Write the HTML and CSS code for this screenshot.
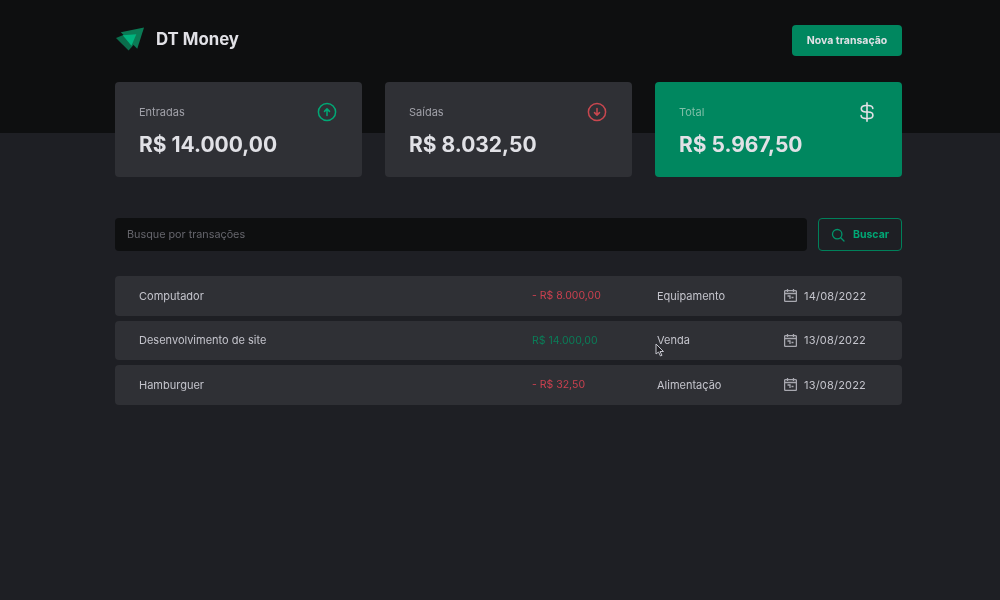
FILE: index.html
```html
<!DOCTYPE html>
<html lang="pt-BR">
<head>
    <meta charset="UTF-8">
    <meta name="viewport" content="width=device-width, initial-scale=1.0">
    <title>DT Money</title>
    <link rel="stylesheet" href="styles.css">
</head>
<body>

    <header class="header">
        <div class="header-content">
            <div class="logo">
                <svg class="logo-icon" width="29" height="25" viewBox="0 0 30 25">
                    <polygon points="0,11 12,6 20,16 13,24" fill="#0a6e4c"/>
                    <polygon points="5,5 29,0 22,22" fill="#0b7a55"/>
                    <polygon points="7,8 21,7 16,19" fill="#00b37e"/>
                </svg>
                <span>DT Money</span>
            </div>
            <button class="new-button">Nova transação</button>
        </div>
    </header>

    <main class="content">
        <section class="summary">
            <div class="card">
                <div class="card-top">
                    <span>Entradas</span>
                    <svg width="20" height="20" viewBox="0 0 20 20" fill="none" stroke="#00a875" stroke-width="1.5" stroke-linecap="round" stroke-linejoin="round">
                        <circle cx="10" cy="10" r="8.6"/>
                        <path d="M10 13.500V7M7.500 9.400 10 6.900l2.500 2.500"/>
                    </svg>
                </div>
                <strong>R$ 14.000,00</strong>
            </div>
            <div class="card">
                <div class="card-top">
                    <span>Saídas</span>
                    <svg width="20" height="20" viewBox="0 0 20 20" fill="none" stroke="#c9474f" stroke-width="1.500" stroke-linecap="round" stroke-linejoin="round">
                        <circle cx="10" cy="10" r="8.6"/>
                        <path d="M10 6.500V13M7.500 10.600 10 13.100l2.500-2.500"/>
                    </svg>
                </div>
                <strong>R$ 8.032,50</strong>
            </div>
            <div class="card card-green">
                <div class="card-top">
                    <span>Total</span>
                    <svg width="20" height="20" viewBox="0 0 20 20" fill="none" stroke="#e1e1e6" stroke-width="1.600" stroke-linecap="round" stroke-linejoin="round">
                        <path d="M10 .800v18.400M15.800 6.500C15.800 4.500 13.800 3.500 11 3.500H9C6.300 3.500 4.300 4.700 4.300 6.800S6.300 10 9 10h2.200c2.700 0 4.700 1.100 4.700 3.200s-2 3.300-4.700 3.300H9c-2.800 0-4.800-1-4.900-3"/>
                    </svg>
                </div>
                <strong>R$ 5.967,50</strong>
            </div>
        </section>

        <form class="search">
            <input type="text" placeholder="Busque por transações">
            <button type="button">
                <svg width="14" height="14" viewBox="0 0 14 14" fill="none" stroke="#00946a" stroke-width="1.300" stroke-linecap="round">
                    <circle cx="6.200" cy="6.200" r="4.700"/>
                    <path d="M9.700 9.700 13 13"/>
                </svg>
                Buscar
            </button>
        </form>

        <div class="transactions">
            <div class="row">
                <span>Computador</span>
                <span class="outcome">- R$ 8.000,00</span>
                <span>Equipamento</span>
                <span class="col-date">
                    <svg width="13" height="13" viewBox="0 0 13 13" fill="none" stroke="#a8a8b0" stroke-width="1.300">
                        <rect x="0.600" y="1.600" width="11.800" height="10.800" rx="1"/>
                        <path d="M0.600 4.500h11.800M3.500 0v3M9.500 0v3M3.500 7h2.500v3M7.500 8.500h2"/>
                    </svg>
                    14/08/2022
                </span>
            </div>
            <div class="row">
                <span>Desenvolvimento de site</span>
                <span class="income">R$ 14.000,00</span>
                <span>Venda</span>
                <span class="col-date">
                    <svg width="13" height="13" viewBox="0 0 13 13" fill="none" stroke="#a8a8b0" stroke-width="1.300">
                        <rect x="0.600" y="1.600" width="11.800" height="10.800" rx="1"/>
                        <path d="M0.600 4.500h11.800M3.500 0v3M9.500 0v3M3.500 7h2.500v3M7.500 8.500h2"/>
                    </svg>
                    13/08/2022
                </span>
            </div>
            <div class="row">
                <span>Hamburguer</span>
                <span class="outcome">- R$ 32,50</span>
                <span>Alimentação</span>
                <span class="col-date">
                    <svg width="13" height="13" viewBox="0 0 13 13" fill="none" stroke="#a8a8b0" stroke-width="1.300">
                        <rect x="0.600" y="1.600" width="11.800" height="10.800" rx="1"/>
                        <path d="M0.600 4.500h11.800M3.500 0v3M9.500 0v3M3.500 7h2.500v3M7.500 8.500h2"/>
                    </svg>
                    13/08/2022
                </span>
            </div>
        </div>
    </main>

    <!-- mouse pointer caught in the capture -->
    <svg class="cursor" width="10" height="14" viewBox="0 0 10 14">
        <path d="M1 1v10l2.500-2 2 4 1.500-.7-2-3.800H8.500z" fill="#202024" stroke="#c4c4cc" stroke-width="1"/>
    </svg>

</body>
</html>
```

FILE: styles.css
```css
* {
    box-sizing: border-box;
}

/* the reference is a soft video frame, hence the small blur */
body {
    margin: 0;
    height: 600px;
    overflow: hidden;
    background-color: #1e1f24;
    color: #c4c4cc;
    font-family: Inter, "Liberation Sans", sans-serif;
    font-size: 11px;
    filter: blur(0.4px);
}

.header {
    height: 133px;
    padding-top: 25px;
    background-color: #0e0f10;
}

.header-content {
    width: 787px;
    margin-left: 115px;
    display: flex;
    justify-content: space-between;
    align-items: flex-start;
}

.logo {
    display: flex;
    align-items: center;
    gap: 11px;
    height: 28px;
    padding-left: 1px;
    color: #e1e1e6;
    font-size: 16.8px;
    font-weight: 700;
}

.new-button {
    width: 110px;
    height: 31px;
    border: none;
    border-radius: 4px;
    background-color: #00875f;
    color: #e1e1e6;
    font-family: inherit;
    font-size: 10.5px;
    font-weight: 700;
}

.content {
    width: 787px;
    margin-left: 115px;
}

.summary {
    display: grid;
    grid-template-columns: repeat(3, 247px);
    gap: 23px;
    margin-top: -51px;
}

.card {
    height: 95px;
    padding: 20px 25px 0 24px;
    border-radius: 4px;
    background-color: #2f3035;
}

.card-top {
    display: flex;
    justify-content: space-between;
    align-items: center;
    height: 20px;
    color: #a0a0a8;
}

.card strong {
    display: block;
    margin-top: 9px;
    color: #e1e1e6;
    font-size: 21px;
    line-height: 27px;
    font-weight: 700;
}

.card-green {
    background-color: #00875f;
}

.card-green .card-top {
    color: #7fbfa8;
}

.search {
    display: flex;
    gap: 11px;
    margin-top: 41px;
}

.search input {
    flex: 1;
    height: 33px;
    padding: 0 12px;
    border: none;
    border-radius: 4px;
    background-color: #0e0f10;
    color: #c4c4cc;
    font-family: inherit;
    font-size: 10.8px;
}

.search input::placeholder {
    color: #66666d;
}

.search button {
    display: flex;
    align-items: center;
    justify-content: center;
    gap: 8px;
    width: 84px;
    height: 33px;
    border: 1px solid #00805a;
    border-radius: 4px;
    background: none;
    color: #00a875;
    font-family: inherit;
    font-size: 10.5px;
    font-weight: 700;
}

.transactions {
    display: flex;
    flex-direction: column;
    gap: 5px;
    margin-top: 25px;
}

.row {
    display: grid;
    grid-template-columns: 393px 125px 127px 1fr;
    align-items: center;
    height: 39.5px;
    padding-left: 24px;
    border-radius: 4px;
    background-color: #2f3035;
}

.outcome {
    color: #c9404f;
    font-size: 10.5px;
}

.income {
    color: #0a7d58;
    font-size: 10.5px;
}

.col-date {
    display: flex;
    align-items: center;
    gap: 7px;
    letter-spacing: 0.2px;
}

.cursor {
    position: absolute;
    left: 655px;
    top: 343px;
}
```
